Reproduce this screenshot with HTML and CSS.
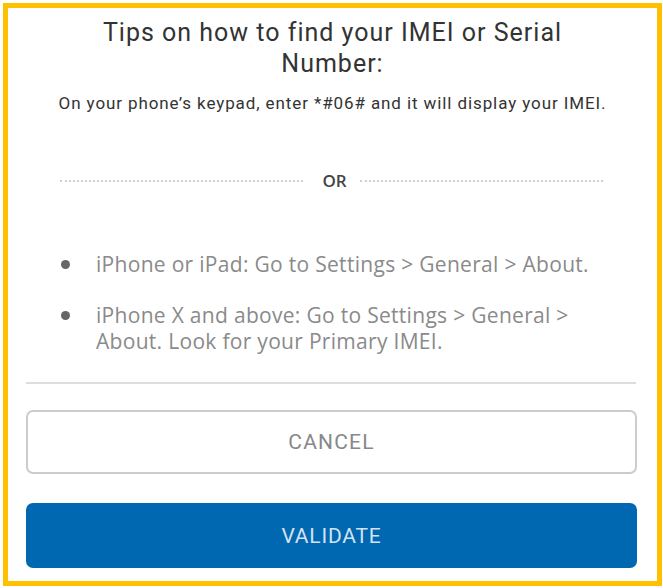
FILE: index.html
```html
<!DOCTYPE html>
<html>
<head>
<meta charset="utf-8">
<link rel="stylesheet" href="styles.css">
</head>
<body>
<div class="frame">
  <h1 class="title">Tips on how to find your IMEI or Serial<br>Number:</h1>
  <p class="subtitle">On your phone’s keypad, enter *#06# and it will display your IMEI.</p>
  <div class="or-row">
    <span class="dots"></span>
    <span class="or">OR</span>
    <span class="dots"></span>
  </div>
  <ul class="tips">
    <li class="tip"><span class="bullet"></span><span class="tip-text">iPhone or iPad: Go to Settings &gt; General &gt; About.</span></li>
    <li class="tip"><span class="bullet"></span><span class="tip-text">iPhone X and above: Go to Settings &gt; General &gt;<br>About. Look for your Primary IMEI.</span></li>
  </ul>
  <div class="sep"></div>
  <button class="btn btn-cancel">CANCEL</button>
  <button class="btn btn-validate">VALIDATE</button>
</div>
</body>
</html>
```

FILE: styles.css
```css
html, body {
  margin: 0;
  padding: 0;
  background: #ffffff;
}
.frame {
  margin: 3px 0 0 3px;
  width: 649px;
  height: 573px;
  border: 5px solid #FFC000;
  box-sizing: content-box;
  padding: 0;
  display: flex;
  flex-direction: column;
  font-family: Roboto, "Liberation Sans", sans-serif;
}
.title {
  margin: 9px 0 0 0;
  font-size: 25px;
  line-height: 31px;
  font-weight: 400;
  letter-spacing: 1px;
  color: #333333;
  text-align: center;
}
.subtitle {
  margin: 14px 0 0 0;
  font-size: 17px;
  line-height: 20px;
  color: #333333;
  text-align: center;
  letter-spacing: 0.9px;
}
.or-row {
  margin: 58px 54px 0 52px;
  display: flex;
  align-items: center;
}
.dots {
  flex: 1;
  border-top: 2px dotted #cfcfcf;
}
.or {
  margin: 0 13px 0 19px;
  font-family: "Open Sans", sans-serif;
  font-size: 17px;
  line-height: 20px;
  font-weight: 600;
  color: #444444;
}
.tips {
  list-style: none;
  margin: 60px 0 0 0;
  padding: 0 10px 0 53px;
  display: flex;
  flex-direction: column;
  gap: 25px;
}
.tip {
  display: flex;
  align-items: flex-start;
  gap: 26px;
}
.bullet {
  flex: none;
  width: 9px;
  height: 9px;
  border-radius: 50%;
  background: #666666;
  margin-top: 9px;
}
.tip-text {
  font-family: "Open Sans", sans-serif;
  font-size: 21px;
  line-height: 26px;
  letter-spacing: 0.3px;
  color: #8a8a8a;
  white-space: nowrap;
}
.sep {
  margin: 28px 21px 0 18px;
  height: 2px;
  background: #dddddd;
}
.btn {
  display: block;
  margin: 0 20px 0 18px;
  border-radius: 7px;
  font-family: Roboto, "Liberation Sans", sans-serif;
  font-size: 21px;
  text-align: center;
  cursor: pointer;
}
.btn-cancel {
  margin-top: 26px;
  height: 64px;
  background: #ffffff;
  border: 2px solid #cccccc;
  color: #888888;
  letter-spacing: 1.2px;
}
.btn-validate {
  margin-top: 29px;
  height: 65px;
  background: #0067B1;
  border: none;
  color: #d3e2f1;
  letter-spacing: 0.8px;
}
```
